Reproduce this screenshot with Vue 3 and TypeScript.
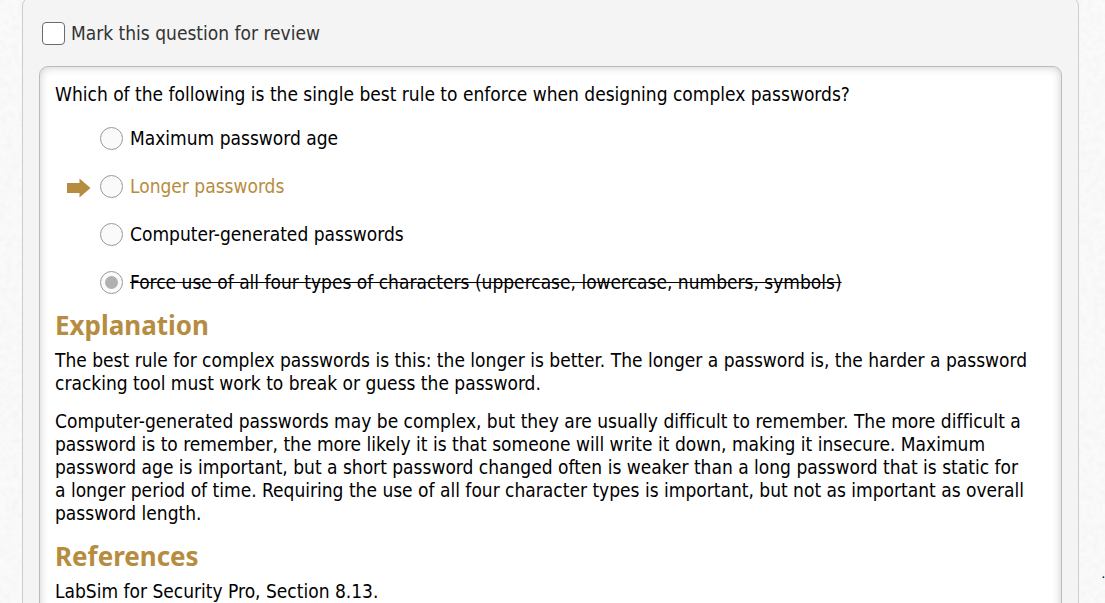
<script setup lang="ts">
import { ref } from 'vue'

interface Answer {
  id: string
  text: string
  correct?: boolean
  struck?: boolean
}

const answers: Answer[] = [
  { id: 'age', text: 'Maximum password age' },
  { id: 'longer', text: 'Longer passwords', correct: true },
  { id: 'generated', text: 'Computer-generated passwords' },
  { id: 'types', text: 'Force use of all four types of characters (uppercase, lowercase, numbers, symbols)', struck: true },
]

const selected = ref('types')
const marked = ref(false)
</script>

<template>
  <div class="page">
    <svg class="texture" aria-hidden="true">
      <filter id="paper">
        <feTurbulence type="fractalNoise" baseFrequency="0.16" numOctaves="3" seed="4" />
        <feColorMatrix values="0 0 0 0 0.9  0 0 0 0 0.9  0 0 0 0 0.9  1.6 0 0 0 -0.55" />
      </filter>
      <rect width="100%" height="100%" filter="url(#paper)" />
    </svg>
    <main class="panel">
      <label class="review">
        <input v-model="marked" type="checkbox" />
        <span>Mark this question for review</span>
      </label>
      <section class="card">
        <p id="question" class="question">Which of the following is the single best rule to enforce when designing complex passwords?</p>
        <div class="answers" role="radiogroup" aria-labelledby="question">
          <div v-for="a in answers" :key="a.id" class="answer">
            <span class="marker">
              <svg v-if="a.correct" width="24" height="20" viewBox="0 0 24 20" aria-hidden="true">
                <path d="M0 5H12.500V0.500L23.500 10L12.500 19.500V15H0Z" fill="#b68d40" />
              </svg>
            </span>
            <label :class="{ correct: a.correct, struck: a.struck }">
              <input v-model="selected" type="radio" name="answer" :value="a.id" disabled />
              <span>{{ a.text }}</span>
            </label>
          </div>
        </div>
        <h2>Explanation</h2>
        <p>The best rule for complex passwords is this: the longer is better. The longer a password is, the harder a password cracking tool must work to break or guess the password.</p>
        <p>Computer-generated passwords may be complex, but they are usually difficult to remember. The more difficult a password is to remember, the more likely it is that someone will write it down, making it insecure. Maximum password age is important, but a short password changed often is weaker than a long password that is static for a longer period of time. Requiring the use of all four character types is important, but not as important as overall password length.</p>
        <h2>References</h2>
        <p>LabSim for Security Pro, Section 8.13.</p>
      </section>
    </main>
    <span class="dot">.</span>
  </div>
</template>

<style>
html,
body {
  margin: 0;
  background: #fafafa;
}
body {
  overflow: hidden;
}
</style>

<style scoped>
.page {
  position: relative;
  box-sizing: border-box;
  height: 100vh;
  overflow: hidden;
  padding: 0 26px 0 22px;
  color: #000;
  font: 19px/23px "DejaVu Sans Condensed", "Noto Sans", sans-serif;
  font-variant-ligatures: none;
}
.texture {
  position: absolute;
  inset: 0;
  width: 100%;
  height: 100%;
}
.panel {
  position: relative;
  box-sizing: border-box;
  min-height: 100vh;
  margin-top: -4px;
  padding: 25px 16px 0;
  border: 1px solid #ccc;
  border-radius: 10px;
  background: #f4f4f4;
}
.review {
  display: flex;
  align-items: center;
  gap: 6px;
  width: max-content;
  margin: 0 3px 21px;
  color: #333;
}
input {
  appearance: none;
  flex: none;
  box-sizing: border-box;
  margin: 0;
}
.review input {
  width: 23px;
  height: 23px;
  border: 1px solid #6b6b6b;
  border-radius: 4px;
  background: #fff;
}
.review input:checked {
  background: #767676;
}
.card {
  box-sizing: border-box;
  padding: 16px 32px 40px 15px;
  border: 1px solid #bbb;
  border-radius: 9px;
  background: #fff;
  box-shadow: inset 0 0 10px #ccc;
}
p {
  margin: 0 0 15px;
}
.question {
  margin-bottom: 8px;
}
.answer {
  display: flex;
  align-items: center;
  height: 48px;
}
.answers {
  margin-bottom: 4px;
}
.marker {
  display: flex;
  width: 33px;
  padding: 4px 0 0 12px;
}
.answer label {
  display: flex;
  align-items: center;
  gap: 7px;
}
.answer input {
  display: grid;
  place-items: center;
  width: 23px;
  height: 23px;
  border: 1px solid #999;
  border-radius: 50%;
  background: #fafafa;
}
.answer input:checked::before {
  content: "";
  width: 13px;
  height: 13px;
  border-radius: 50%;
  background: #b0b0b0;
}
.correct {
  color: #b68d40;
}
.struck {
  text-decoration: line-through;
}
h2 {
  margin: 0 0 8px;
  color: #b68d40;
  font-family: "Noto Sans", sans-serif;
  font-size: 26px;
  line-height: 31px;
}
p + h2 {
  margin-top: 16px;
}
.dot {
  position: absolute;
  right: 0;
  bottom: 18px;
  font-family: "Noto Sans", sans-serif;
  font-size: 12px;
}
</style>
